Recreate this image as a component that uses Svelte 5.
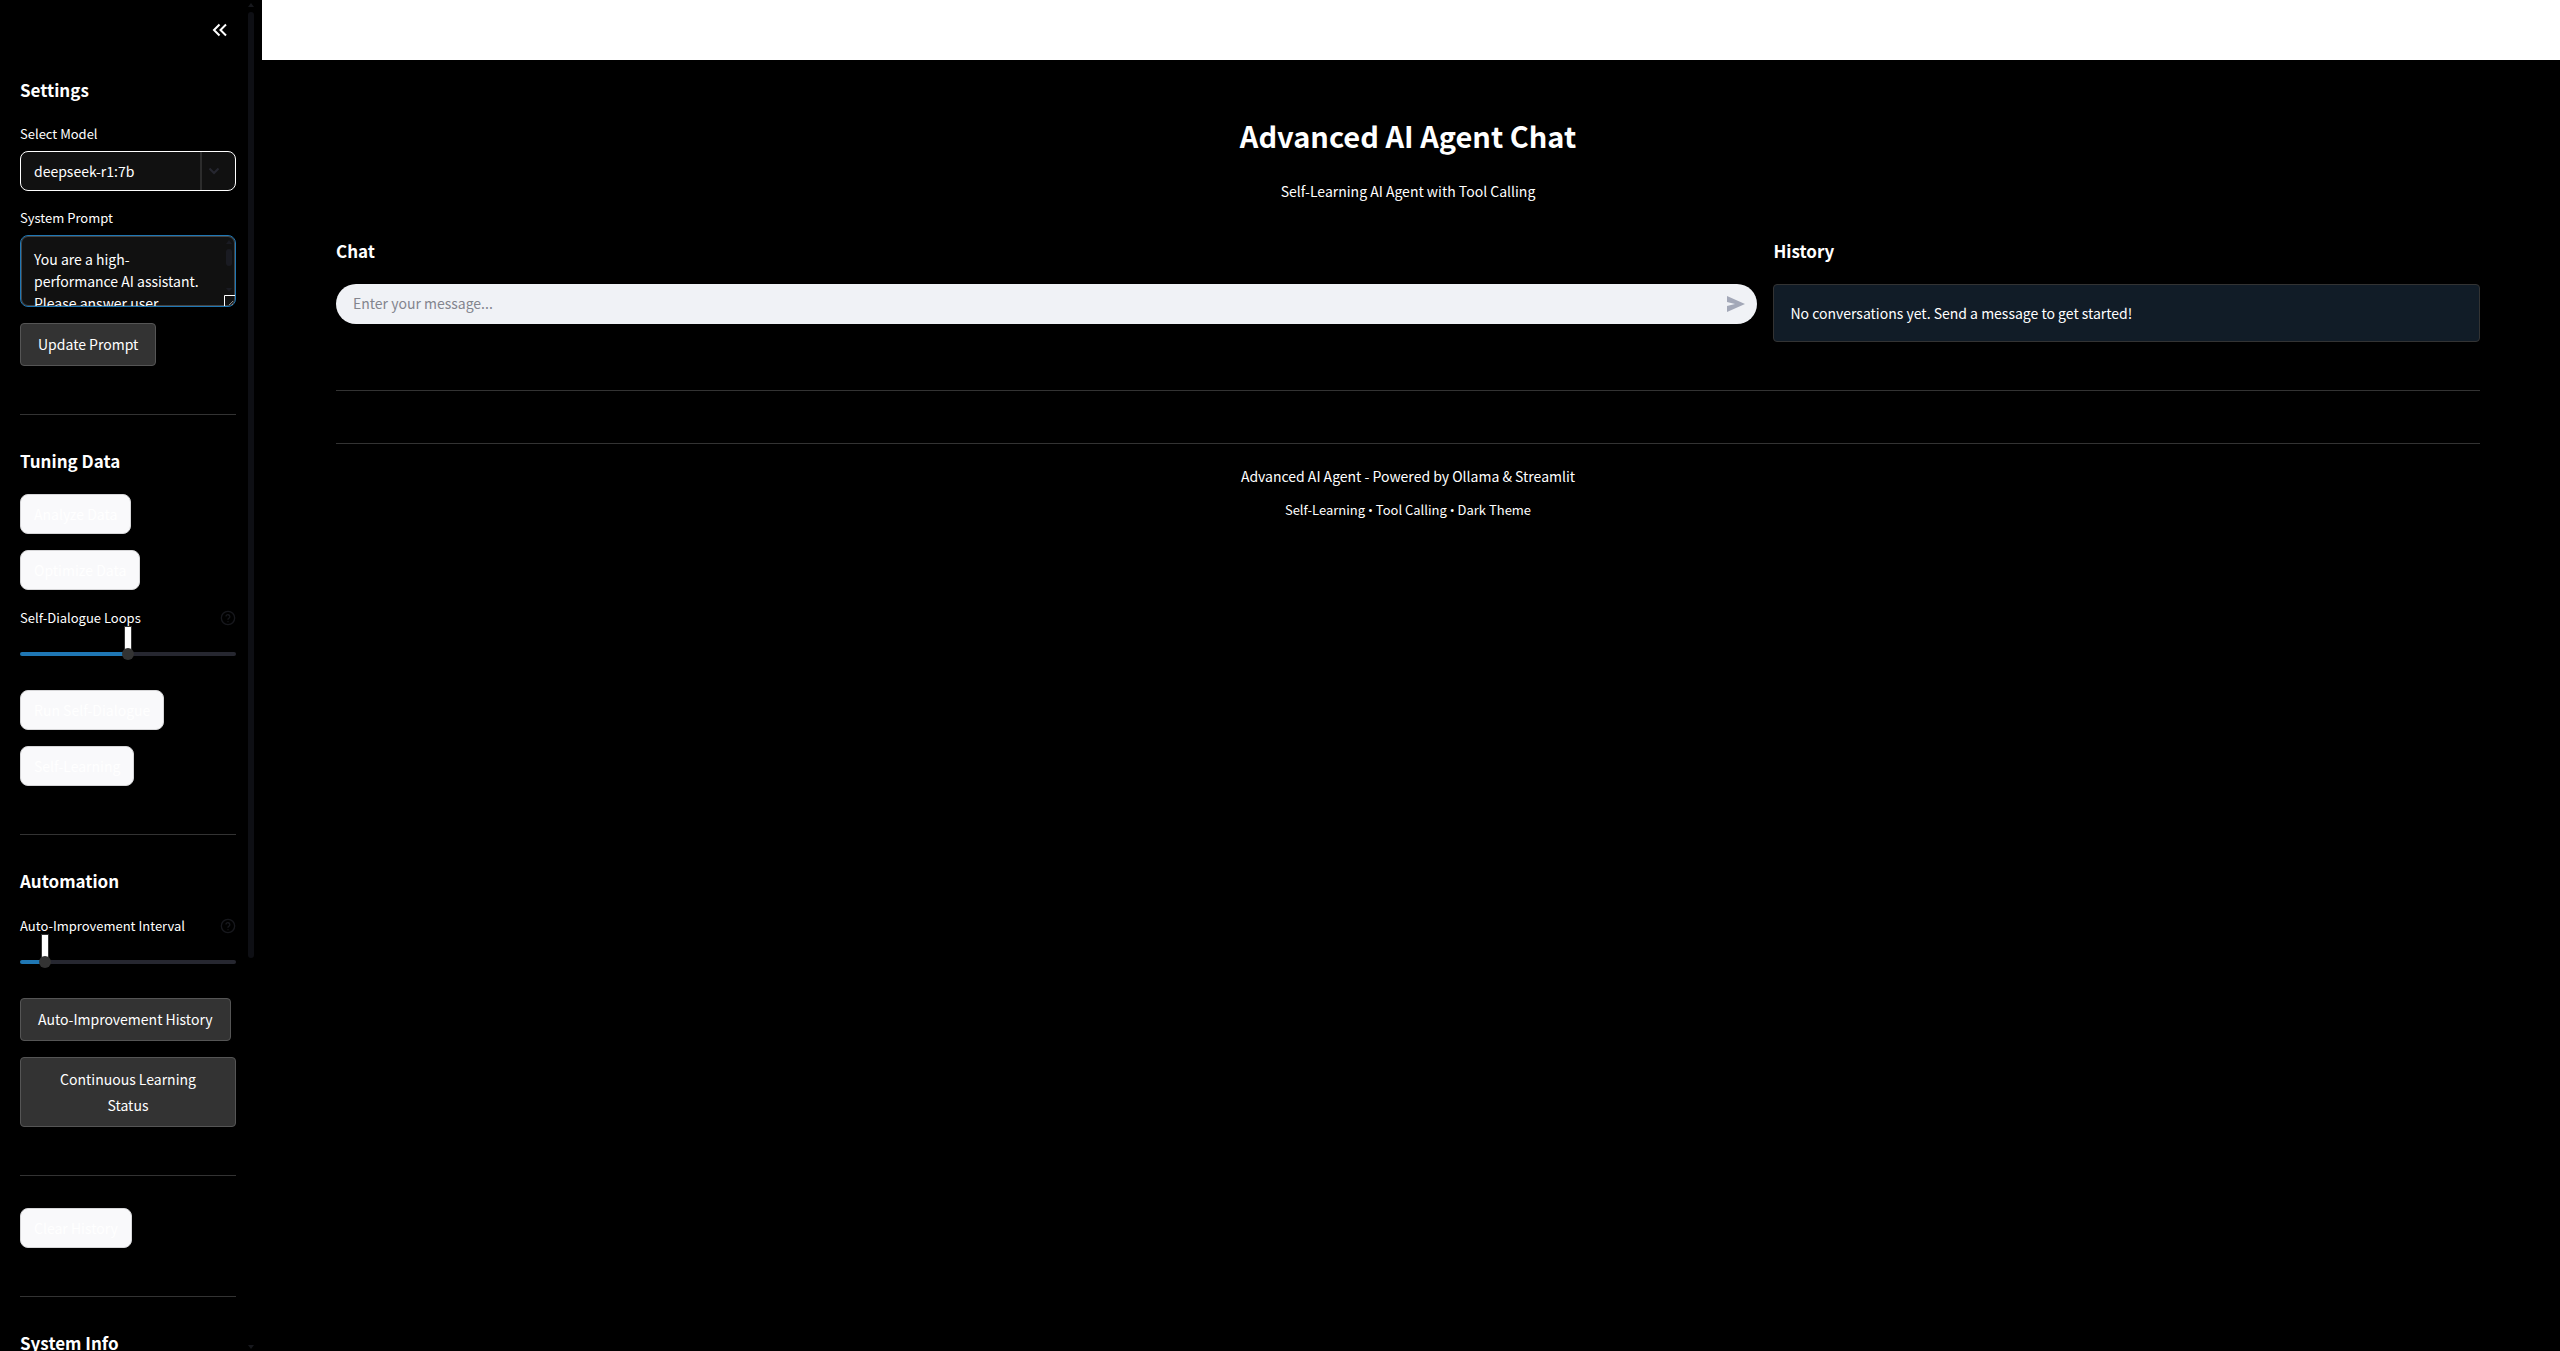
<script>
  let model = $state('deepseek-r1:7b');
  let prompt = $state('You are a high-performance AI assistant. Please answer user questions accurately.');
  let message = $state('');
  let loops = $state(5);
  let interval = $state(1);
</script>

{#snippet help(label)}
  <button class="help" type="button" aria-label={label}>
    <svg viewBox="0 0 24 24" width="16" height="16" fill="none" stroke="currentColor" stroke-width="2" stroke-linecap="round" stroke-linejoin="round">
      <circle cx="12" cy="12" r="10" />
      <path d="M9 9a3 3 0 0 1 5.8 1c0 2-2.8 2.400-2.800 4M12 17.500v.01" />
    </svg>
  </button>
{/snippet}

<div class="app">
  <aside class="sidebar">
    <div class="sidebar-top">
      <button class="collapse" type="button" aria-label="Collapse sidebar">
        <svg viewBox="0 0 16 14" width="16" height="14" fill="none" stroke="currentColor" stroke-width="2">
          <path d="M7.500 1.500L2 7l5.500 5.500M14 1.500L8.500 7l5.500 5.500" />
        </svg>
      </button>
    </div>

    <div class="stack">
      <h2>Settings</h2>
      <div class="field">
        <label for="model">Select Model</label>
        <div class="select-box">
          <select id="model" bind:value={model}>
            <option>deepseek-r1:7b</option>
          </select>
          <span class="chevron">
            <svg viewBox="0 0 12 8" width="12" height="8" fill="none" stroke="currentColor" stroke-width="2"><path d="M1.500 1.500L6 6l4.500-4.500" /></svg>
          </span>
        </div>
      </div>
      <div class="field">
        <label for="prompt">System Prompt</label>
        <div class="area-box">
          <textarea id="prompt" bind:value={prompt}></textarea>
          <svg class="area-scroll" viewBox="0 0 8 54" width="8" height="54" fill="#1a1b22">
            <path d="M4 0l3 4H1z" /><rect x="1" y="9" width="6" height="17" rx="3" /><path d="M4 52l3-4H1z" />
          </svg>
          <svg class="grip" viewBox="0 0 11 11" width="11" height="11" fill="none">
            <path d="M.5 11V.5H11" stroke="#fff" /><path d="M5 10l4-4M8 10l1-1" stroke="#888" />
          </svg>
        </div>
      </div>
      <button class="dark" type="button">Update Prompt</button>

      <hr />

      <h2>Tuning Data</h2>
      <button class="light" type="button">Analyze Data</button>
      <button class="light" type="button">Optimize Data</button>
      <div class="slider-field">
        <div class="label-row">
          <label for="loops">Self-Dialogue Loops</label>
          {@render help('About self-dialogue loops')}
        </div>
        <div class="slider" style:--p={loops / 10}>
          <output for="loops">{loops}</output>
          <input id="loops" type="range" min="0" max="10" bind:value={loops} />
        </div>
      </div>
      <button class="light" type="button">Run Self-Dialogue</button>
      <button class="light" type="button">Self-Learning</button>

      <hr />

      <h2>Automation</h2>
      <div class="slider-field">
        <div class="label-row">
          <label for="interval">Auto-Improvement Interval</label>
          {@render help('About the auto-improvement interval')}
        </div>
        <div class="slider" style:--p={interval / 11}>
          <output for="interval">{interval}</output>
          <input id="interval" type="range" min="0" max="11" bind:value={interval} />
        </div>
      </div>
      <button class="dark" type="button">Auto-Improvement History</button>
      <button class="dark two-line" type="button">Continuous Learning<br />Status</button>

      <hr />

      <button class="light" type="button">Clear History</button>

      <hr />

      <h2>System Info</h2>
    </div>

    <div class="scrollbar" aria-hidden="true">
      <svg viewBox="0 0 6 4" width="6" height="4"><path d="M3 0l3 4H0z" fill="currentColor" /></svg>
      <div class="thumb"></div>
      <svg viewBox="0 0 6 4" width="6" height="4"><path d="M3 4l3-4H0z" fill="currentColor" /></svg>
    </div>
  </aside>

  <div class="page">
    <header></header>
    <main>
      <h1>Advanced AI Agent Chat</h1>
      <p class="subtitle">Self-Learning AI Agent with Tool Calling</p>
      <div class="columns">
        <section>
          <h2>Chat</h2>
          <form class="chat" onsubmit={(e) => e.preventDefault()}>
            <input type="text" placeholder="Enter your message..." aria-label="Message" bind:value={message} />
            <button type="submit" aria-label="Send">
              <svg viewBox="0 0 18 16" width="18" height="16" fill="currentColor"><path d="M0 0L18 8 0 16V10L8 8 0 6z" /></svg>
            </button>
          </form>
        </section>
        <section>
          <h2>History</h2>
          <div class="info">No conversations yet. Send a message to get started!</div>
        </section>
      </div>
      <hr />
      <hr class="second" />
      <footer>
        <p>Advanced AI Agent - Powered by Ollama &amp; Streamlit</p>
        <p class="small">Self-Learning <span class="dot">•</span> Tool Calling <span class="dot">•</span> Dark Theme</p>
      </footer>
    </main>
  </div>
</div>

<style>
  :global(body) {
    background: #000;
  }
  .app {
    display: flex;
    height: 100vh;
    overflow: hidden;
    background: #000;
    color: #fff;
    font-family: 'Source Sans Pro', 'Noto Sans CJK SC', sans-serif;
    font-size: 14px;
    line-height: 26px;
  }
  .app * {
    box-sizing: border-box;
  }
  button,
  input,
  select,
  textarea {
    font: inherit;
    color: inherit;
    margin: 0;
  }
  svg {
    display: block;
  }
  h1,
  h2,
  p {
    margin: 0;
  }
  h2 {
    height: 31px;
    font-size: 17px;
    line-height: 28px;
    font-weight: 700;
  }
  hr {
    width: 100%;
    height: 1px;
    margin: 32px 0 16px;
    border: 0;
    background: #333;
  }

  .sidebar {
    position: relative;
    flex: none;
    width: 256px;
    overflow: hidden;
  }
  .sidebar-top {
    display: flex;
    align-items: center;
    justify-content: flex-end;
    height: 60px;
    padding-right: 28px;
  }
  .collapse,
  .help {
    padding: 0;
    border: 0;
    background: none;
  }
  .stack {
    display: flex;
    flex-direction: column;
    align-items: flex-start;
    gap: 16px;
    padding: 16px 20px;
  }
  .field,
  .slider-field {
    width: 100%;
  }
  label {
    display: block;
    font-size: 13px;
    line-height: 22px;
  }
  .field label {
    margin-bottom: 6px;
  }
  .select-box {
    display: flex;
    height: 40px;
    border: 1px solid #fff;
    border-radius: 8px;
    background: #111;
    overflow: hidden;
  }
  select {
    flex: 1;
    min-width: 0;
    padding: 0 13px;
    border: 0;
    background: none;
    appearance: none;
  }
  .chevron {
    display: grid;
    place-items: center;
    width: 35px;
    padding-right: 9px;
    border-left: 2px solid #2c2c2c;
    color: #262730;
  }
  .area-box {
    position: relative;
    height: 72px;
  }
  textarea {
    display: block;
    width: 100%;
    height: 100%;
    padding: 12px 24px 12px 13px;
    border: 1px solid #1f77b4;
    border-radius: 8px;
    background: #111;
    box-shadow: inset 0 0 0 1px #444;
    line-height: 22px;
    resize: none;
    overflow: hidden;
    outline: 0;
  }
  .area-scroll {
    position: absolute;
    top: 5px;
    right: 3px;
  }
  .grip {
    position: absolute;
    right: 1px;
    bottom: 1px;
  }
  .dark {
    max-width: 100%;
    padding: 7px 17px 8px;
    border: 1px solid #555;
    border-radius: 4px;
    background: #333;
    line-height: 26px;
  }
  .two-line {
    width: 100%;
    padding-top: 8px;
  }
  .light {
    height: 40px;
    padding: 0 13px;
    border: 1px solid #d6d6d8;
    border-radius: 8px;
    background: #f9f9fb;
    color: #fff;
  }
  .label-row {
    display: flex;
    align-items: center;
    justify-content: space-between;
    height: 24px;
  }
  .help {
    color: #17181d;
  }
  .slider {
    position: relative;
    height: 44px;
    padding-top: 18px;
  }
  .slider output {
    position: absolute;
    top: -4px;
    left: calc(6px + (100% - 12px) * var(--p));
    width: 8px;
    height: 24px;
    margin-left: -4px;
    border: 1px solid #333;
    border-width: 1px 1px 0;
    background: #fff;
    line-height: 24px;
    text-align: center;
    overflow: hidden;
  }
  .slider input {
    position: relative;
    display: block;
    width: 100%;
    height: 12px;
    background: none;
    appearance: none;
  }
  .slider input::-webkit-slider-runnable-track {
    height: 4px;
    border-radius: 2px;
    background: linear-gradient(to right, #1f77b4 calc(100% * var(--p)), #262730 calc(100% * var(--p)));
  }
  .slider input::-webkit-slider-thumb {
    width: 12px;
    height: 12px;
    margin-top: -4px;
    border-radius: 50%;
    background: #333;
    appearance: none;
  }
  .scrollbar {
    position: absolute;
    top: 3px;
    right: 2px;
    bottom: 2px;
    display: flex;
    flex-direction: column;
    justify-content: space-between;
    width: 6px;
    color: #17181d;
  }
  .thumb {
    height: calc(70% + 4px);
    margin: 5px 0 auto;
    border-radius: 3px;
    background: #0e0f14;
  }

  .page {
    flex: 1;
    min-width: 0;
  }
  header {
    height: 60px;
    margin-left: 6px;
    background: #fff;
  }
  main {
    padding: 53px 80px;
  }
  h1 {
    font-size: 29px;
    line-height: 44px;
    font-weight: 700;
    text-align: center;
  }
  .subtitle {
    padding: 21px 0 33px;
    text-align: center;
  }
  .columns {
    display: flex;
    gap: 16px;
    height: 105px;
  }
  section {
    flex: 1 1 calc(33.33% - 16px);
  }
  section:first-child {
    flex-basis: calc(66.67% - 16px);
  }
  section h2 {
    margin-bottom: 16px;
  }
  .chat {
    display: flex;
    align-items: center;
    height: 40px;
    padding: 0 12px 0 17px;
    border-radius: 20px;
    background: #f0f2f6;
  }
  .chat input {
    flex: 1;
    min-width: 0;
    padding: 0 0 2px;
    border: 0;
    outline: 0;
    background: none;
    color: #31333f;
  }
  .chat input::placeholder {
    color: #83858e;
    opacity: 1;
  }
  .chat button {
    padding: 0;
    border: 0;
    background: none;
    color: #a3a8b8;
  }
  .info {
    padding: 15px 16px;
    border: 1px solid #333;
    border-radius: 4px;
    background: #111c27;
  }
  main hr {
    margin: 48px 0 52px;
  }
  main hr.second {
    margin-bottom: 19px;
  }
  footer {
    text-align: center;
  }
  .small {
    margin-top: 8px;
    font-size: 13px;
  }
  .dot {
    font-family: 'Open Sans', sans-serif;
  }
</style>
